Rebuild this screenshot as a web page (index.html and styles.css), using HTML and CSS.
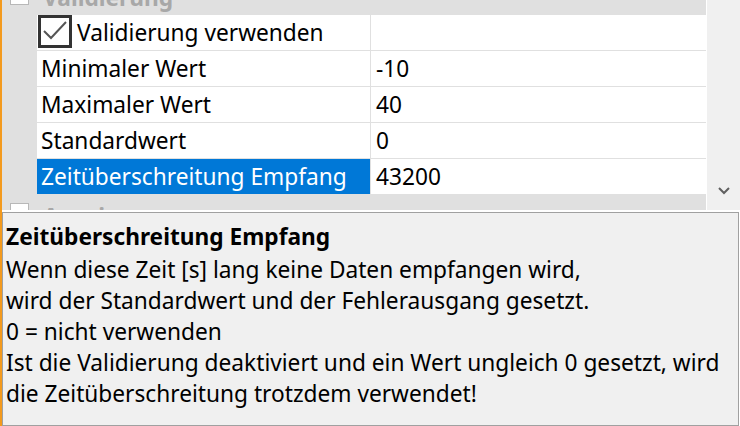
FILE: index.html
```html
<!DOCTYPE html>
<html lang="de">
<head>
<meta charset="utf-8">
<title>Eigenschaften</title>
<link rel="stylesheet" href="styles.css">
</head>
<body>
<div class="app">
  <div class="grid-area">
    <div class="grid">
      <div class="cat cat-top">
        <span class="cat-box"></span>
        <span class="cat-label">Validierung</span>
      </div>
      <div class="row">
        <div class="gutter"></div>
        <div class="name name-check">
          <span class="checkbox">
            <svg width="28" height="27" viewBox="0 0 28 27"><path d="M3 13 L10 20 L25 4" fill="none" stroke="#555" stroke-width="2"/></svg>
          </span>
          <span class="check-label">Validierung verwenden</span>
        </div>
        <div class="value"></div>
      </div>
      <div class="row">
        <div class="gutter"></div>
        <div class="name">Minimaler Wert</div>
        <div class="value">-10</div>
      </div>
      <div class="row">
        <div class="gutter"></div>
        <div class="name">Maximaler Wert</div>
        <div class="value">40</div>
      </div>
      <div class="row">
        <div class="gutter"></div>
        <div class="name">Standardwert</div>
        <div class="value">0</div>
      </div>
      <div class="row row-last">
        <div class="gutter"></div>
        <div class="name selected">Zeitüberschreitung Empfang</div>
        <div class="value">43200</div>
      </div>
      <div class="cat cat-bottom">
        <span class="cat-box"></span>
        <span class="cat-label">Anzeige</span>
      </div>
    </div>
    <div class="gap"></div>
    <div class="scrollbar">
      <svg class="chev" width="12" height="8" viewBox="0 0 12 8"><path d="M1 1 L6 6 L11 1" fill="none" stroke="#606060" stroke-width="2"/></svg>
    </div>
  </div>
  <div class="desc">
    <div class="desc-title">Zeitüberschreitung Empfang</div>
    <div class="desc-text">Wenn diese Zeit [s] lang keine Daten empfangen wird,<br>wird der Standardwert und der Fehlerausgang gesetzt.<br>0 = nicht verwenden<br>Ist die Validierung deaktiviert und ein Wert ungleich 0 gesetzt, wird<br>die Zeitüberschreitung trotzdem verwendet!</div>
  </div>
</div>
</body>
</html>
```
FILE: styles.css
```css
html, body {
  margin: 0;
  padding: 0;
  background: #ffffff;
  overflow: hidden;
}
body {
  font-family: "Noto Sans", "Open Sans", sans-serif;
  font-size: 22.7px;
  color: #000;
}
.app {
  width: 740px;
  height: 426px;
  box-sizing: border-box;
  border-left: 2px solid #f39a1e;
  display: flex;
  flex-direction: column;
}
.grid-area {
  display: flex;
  height: 210px;
  flex: none;
}
.grid {
  width: 704px;
  display: flex;
  flex-direction: column;
  background: #fff;
}
.gap {
  width: 1px;
  background: #fff;
}
.scrollbar {
  width: 33px;
  background: #f0f0f0;
  display: flex;
  flex-direction: column;
  justify-content: flex-end;
  align-items: center;
  padding-bottom: 15px;
  box-sizing: border-box;
}
.cat {
  background: #e0e0e0;
  display: flex;
  overflow: hidden;
  flex: none;
  align-items: flex-start;
}
.cat-top {
  height: 15px;
}
.cat-top .cat-box {
  margin-top: -14px;
}
.cat-top .cat-label {
  margin-top: -12px;
}
.cat-bottom {
  height: 16px;
}
.cat-bottom .cat-box {
  margin-top: 9px;
}
.cat-bottom .cat-label {
  margin-top: 10px;
  line-height: 6px;
  height: 6px;
}
.cat-box {
  width: 17px;
  height: 17px;
  border: 1px solid #b8b8b8;
  background: #fff;
  margin-left: 8px;
  flex: none;
}
.cat-label {
  margin-left: 14px;
  font-weight: bold;
  color: #a8a8a8;
  line-height: 20px;
}
.cat-bottom .cat-label {
  line-height: 26px;
  height: 6px;
  overflow: hidden;
  margin-top: 10px;
}
.row {
  display: flex;
  height: 36px;
  flex: none;
}
.gutter {
  width: 35px;
  background: #e0e0e0;
  flex: none;
}
.name {
  border-bottom: 1px solid #e0e0e0;
  border-right: 1px solid #e0e0e0;
  box-sizing: border-box;
  width: 334px;
  padding-left: 4px;
  display: flex;
  align-items: center;
  white-space: nowrap;
  flex: none;
}
.value {
  flex: 1;
  border-bottom: 1px solid #e0e0e0;
  padding-left: 5px;
  display: flex;
  align-items: center;
  white-space: nowrap;
}
.row-last .name,
.row-last .value {
  border-bottom: none;
  height: 35px;
}
.row-last {
  height: 35px;
}
.name-check {
  padding-left: 1px;
}
.checkbox {
  width: 28px;
  height: 27px;
  border: 3px solid #333;
  align-self: flex-start;
  margin-right: 5px;
  display: flex;
  flex: none;
}
.selected {
  background: #0078d7;
  color: #fff;
  border-bottom: none;
}
.desc {
  margin-top: 2px;
  flex: 1;
  margin-right: 1px;
  border: 1px solid #a0a0a0;
  background: #f0f0f0;
  padding: 6px 0 0 3px;
}
.desc-title {
  font-weight: bold;
  line-height: 35px;
}
.desc-text {
  line-height: 31px;
}
```
